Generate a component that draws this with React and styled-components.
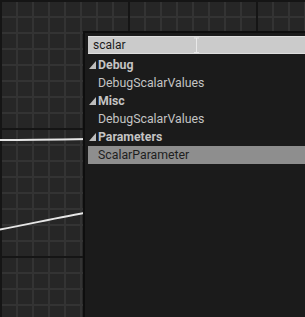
import React from 'react';
import styled, { createGlobalStyle } from 'styled-components';

const GlobalStyle = createGlobalStyle`
	html, body {
		margin: 0;
		padding: 0;
		width: 100%;
		height: 100%;
		overflow: hidden;
		background: #262626;
	}
	#root {
		height: 100%;
	}
`;

const Graph = styled.div`
	position: relative;
	width: 100%;
	height: 100%;
	overflow: hidden;
	font-family: Roboto, 'Liberation Sans', sans-serif;
	background-color: #262626;
	background-image:
		linear-gradient(to right, #151515 0, #151515 2px, transparent 2px),
		linear-gradient(to bottom, #151515 0, #151515 2px, transparent 2px),
		linear-gradient(to right, #333333 0, #333333 2px, transparent 2px),
		linear-gradient(to bottom, #333333 0, #333333 2px, transparent 2px);
	background-size: 128px 128px, 128px 128px, 16px 16px, 16px 16px;
`;

const Wires = styled.svg`
	position: absolute;
	left: 0;
	top: 0;
`;

const Menu = styled.div`
	position: absolute;
	left: 83px;
	top: 31px;
	right: -20px;
	bottom: -20px;
	background: #1b1b1b;
	border: 2px solid #0e0e0e;
	padding: 3px 0 0 3px;
	display: flex;
	flex-direction: column;
`;

const Search = styled.div`
	position: relative;
	height: 16px;
	background: #cbcbcb;
	border-top: 1px solid #dedede;
	border-bottom: 1px solid #dedede;
	display: flex;
	align-items: center;
	padding-left: 5px;
	font-size: 12px;
	color: #1c1c1c;
	margin-bottom: 2px;
`;

const Caret = styled.svg`
	position: absolute;
	left: 105px;
	top: 0;
`;

const Row = styled.div`
	height: 18px;
	display: flex;
	align-items: center;
	padding-left: ${(p) => (p.$header ? '1px' : '10px')};
	gap: 2px;
	font-size: 12.3px;
	font-weight: ${(p) => (p.$header ? 700 : 400)};
	color: ${(p) => (p.$selected ? '#1e1e1e' : '#c4c4c4')};
	background: ${(p) => (p.$selected ? '#8e8e8e' : 'transparent')};
	white-space: nowrap;
`;

const Arrow = () => (
	<svg width="7" height="8" viewBox="0 0 7 8">
		<polygon points="7,0 7,8 0,8" fill="#bdbdbd" />
	</svg>
);

const groups = [
	{ name: 'Debug', items: ['DebugScalarValues'] },
	{ name: 'Misc', items: ['DebugScalarValues'] },
	{ name: 'Parameters', items: ['ScalarParameter'], selected: 'ScalarParameter' },
];

export default function App() {
	return (
		<>
			<GlobalStyle />
			<Graph>
				<Wires width="90" height="317">
					<path d="M0 140 C 30 140, 60 139.5, 90 139" stroke="#e6e6e6" strokeWidth="1.8" fill="none" />
					<path d="M0 229.5 C 30 224, 60 217, 90 212" stroke="#e6e6e6" strokeWidth="1.8" fill="none" />
				</Wires>
				<Menu>
					<Search>
						scalar
						<Caret width="7" height="17" viewBox="0 0 7 17">
							<path d="M1 1 H6 M3.5 1 V15.5 M1 15.5 H6" stroke="#e8e8e8" strokeWidth="1" fill="none" />
						</Caret>
					</Search>
					{groups.map((g) => (
						<React.Fragment key={g.name}>
							<Row $header>
								<Arrow />
								{g.name}
							</Row>
							{g.items.map((it) => (
								<Row key={it} $selected={g.selected === it}>
									{it}
								</Row>
							))}
						</React.Fragment>
					))}
				</Menu>
			</Graph>
		</>
	);
}
